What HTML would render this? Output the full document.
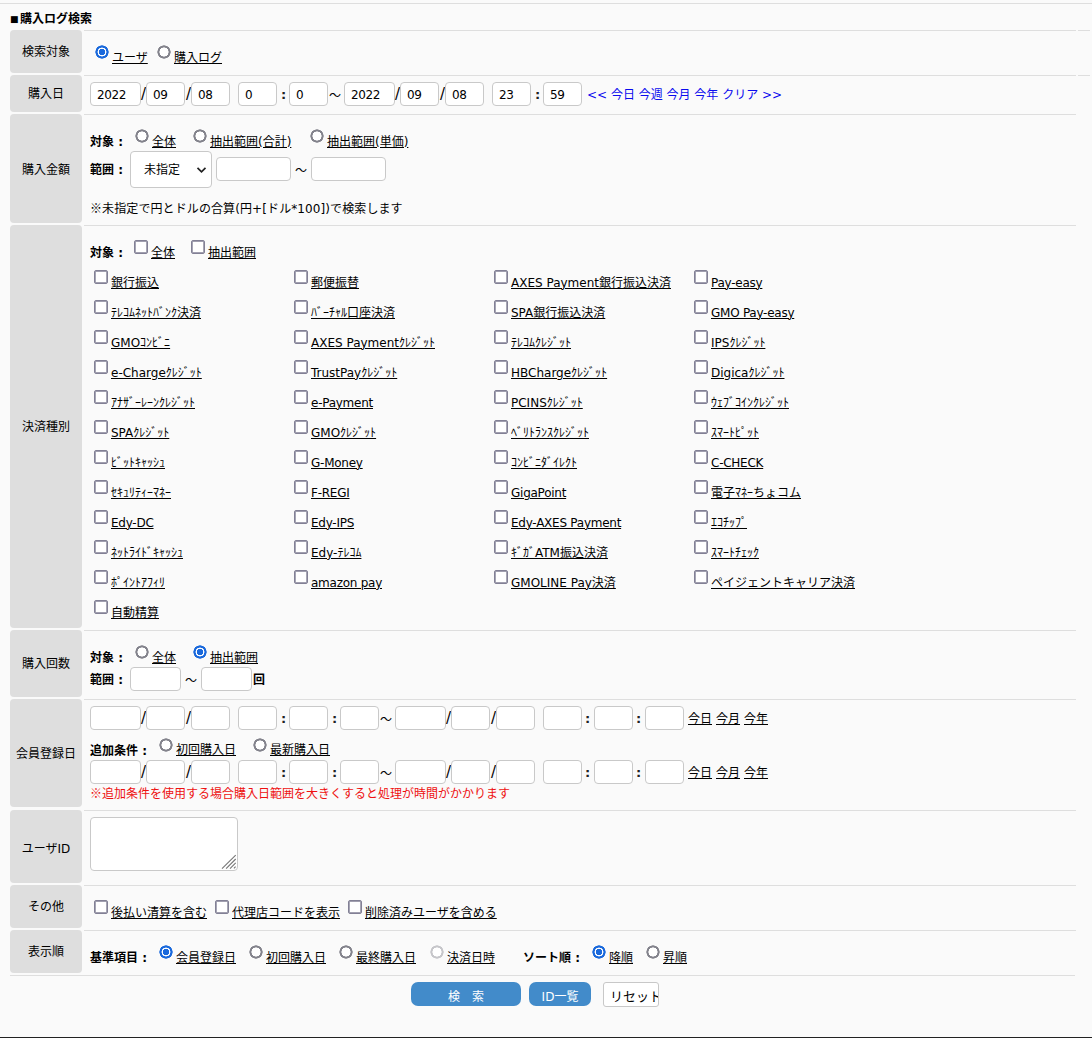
<!DOCTYPE html>
<html lang="ja"><head><meta charset="utf-8"><title>購入ログ検索</title>
<style>
*{box-sizing:border-box}
html,body{margin:0;padding:0}
body{width:1092px;height:1038px;position:relative;overflow:hidden;background:#fafafa;color:#000;
 font-family:"DejaVu Sans","Liberation Sans","Noto Sans CJK JP",sans-serif;font-size:12px;line-height:16px}
.abs,.t,.b,.u,.th,.td,.in,.hl,input,textarea,.sel,.btn{position:absolute}
.t,.b,.u{white-space:nowrap;height:16px;line-height:16px}
.b{font-weight:bold}
.u{text-decoration:underline;text-underline-offset:0.5px;text-decoration-thickness:1px}
.th{left:10px;width:72px;background:#dedede;border-radius:4px;display:flex;align-items:center;justify-content:center;text-align:center;padding-top:1px}
.hl{height:1px;background:#dedede}
.in{height:24px;border:1px solid #c9c9c9;border-radius:4px;background:#fff;padding:0 0 0 6px;line-height:24px;font-size:12px;letter-spacing:-.4px}
.sl{font-size:15px;margin-top:-1px}
.co{font-size:13px;font-weight:bold;color:#222}
input[type=radio],input[type=checkbox]{margin:0;width:14px;height:14px;-webkit-appearance:none;appearance:none;background:#fff}
input[type=checkbox]{border:1px solid #828095;border-radius:2px;box-shadow:inset 0 0 0 .7px #828095}
input[type=radio]{border-radius:50%;background:radial-gradient(circle 7px at center,#fff 4.3px,#83838c 4.8px,#83838c 6.4px,rgba(131,131,140,0) 6.9px)}
input[type=radio]:checked{background:radial-gradient(circle 7px at center,#1a69dc 2.9px,#fff 3.4px,#fff 4.2px,#1a69dc 4.7px,#1a69dc 6.4px,rgba(26,105,220,0) 6.9px)}
input[type=radio]:disabled{background:radial-gradient(circle 7px at center,#fff 4.3px,#c6c6ca 4.8px,#c6c6ca 6.4px,rgba(198,198,202,0) 6.9px)}
textarea{border:1px solid #c9c9c9;border-radius:4px;background:#fff;margin:0;padding:2px}
.sel{border:1px solid #c9c9c9;border-radius:4px;background:#fff}
.btn{border-radius:7px;background:#428bca;color:#fff;text-align:center;height:24px;line-height:31px;overflow:hidden}
.blue{color:#0a0aee}
.red{color:#ee1010}
.hk{font-family:"Noto Sans CJK JP","Liberation Sans",sans-serif}
</style></head>
<body>
<div class="hl" style="left:0px;top:3px;width:1092px"></div>
<div class="b" style="left:10px;top:11px"><span style="display:inline-block;width:10px;font-size:9px;vertical-align:1px">■</span>購入ログ検索</div>
<div class="th" style="top:30px;height:43px;">検索対象</div>
<div class="hl" style="left:84px;top:30px;width:992px"></div>
<div class="th" style="top:75px;height:37px;">購入日</div>
<div class="hl" style="left:84px;top:75px;width:992px"></div>
<div class="th" style="top:114px;height:109px;padding-top:3px;">購入金額</div>
<div class="hl" style="left:84px;top:114px;width:992px"></div>
<div class="th" style="top:225px;height:403px;">決済種別</div>
<div class="hl" style="left:84px;top:225px;width:992px"></div>
<div class="th" style="top:630px;height:67px;">購入回数</div>
<div class="hl" style="left:84px;top:630px;width:992px"></div>
<div class="th" style="top:699px;height:108px;padding-top:2px;">会員登録日</div>
<div class="hl" style="left:84px;top:699px;width:992px"></div>
<div class="th" style="top:810px;height:73px;padding-top:5px;">ユーザID</div>
<div class="hl" style="left:84px;top:810px;width:992px"></div>
<div class="th" style="top:885px;height:43px;">その他</div>
<div class="hl" style="left:84px;top:885px;width:992px"></div>
<div class="th" style="top:930px;height:43px;">表示順</div>
<div class="hl" style="left:84px;top:930px;width:992px"></div>
<div class="hl" style="left:1078px;top:30px;width:12px"></div>
<div class="hl" style="left:1078px;top:75px;width:12px"></div>
<div class="hl" style="left:10px;top:975px;width:1065px"></div>
<input type="radio" style="left:95px;top:45px" checked>
<div class="u" style="left:112px;top:50px;">ユーザ</div>
<input type="radio" style="left:157px;top:45px">
<div class="u" style="left:174px;top:50px;">購入ログ</div>
<div class="in" style="left:90px;top:82px;width:51px">2022</div>
<div class="t sl" style="left:141px;top:87px;">/</div>
<div class="in" style="left:146px;top:82px;width:39px">09</div>
<div class="t sl" style="left:186px;top:87px;">/</div>
<div class="in" style="left:191px;top:82px;width:39px">08</div>
<div class="in" style="left:238px;top:82px;width:39px">0</div>
<div class="t co" style="left:281px;top:87px;">:</div>
<div class="in" style="left:289px;top:82px;width:39px">0</div>
<div class="t hk" style="left:329px;top:87px;">～</div>
<div class="in" style="left:344px;top:82px;width:51px">2022</div>
<div class="t sl" style="left:395px;top:87px;">/</div>
<div class="in" style="left:400px;top:82px;width:39px">09</div>
<div class="t sl" style="left:440px;top:87px;">/</div>
<div class="in" style="left:445px;top:82px;width:39px">08</div>
<div class="in" style="left:492px;top:82px;width:39px">23</div>
<div class="t co" style="left:535px;top:87px;">:</div>
<div class="in" style="left:543px;top:82px;width:39px">59</div>
<div class="t blue" style="left:587px;top:87px;"><< 今日 今週 今月 今年 クリア >></div>
<div class="b" style="left:90px;top:134px;">対象 :</div>
<input type="radio" style="left:135px;top:129px">
<div class="u" style="left:152px;top:134px;">全体</div>
<input type="radio" style="left:193px;top:129px">
<div class="u" style="left:210px;top:134px;">抽出範囲(合計)</div>
<input type="radio" style="left:310px;top:129px">
<div class="u" style="left:327px;top:134px;">抽出範囲(単価)</div>
<div class="b" style="left:90px;top:162px;">範囲 :</div>
<div class="sel" style="left:130px;top:151px;width:82px;height:37px"><div class="t" style="left:13px;top:10px">未指定</div><svg class="abs" style="left:65px;top:14px" width="11" height="8" viewBox="0 0 11 8"><path d="M1.5 1.8 L5.5 5.8 L9.5 1.8" fill="none" stroke="#222" stroke-width="1.7"/></svg></div>
<div class="in" style="left:216px;top:157px;width:75px"></div>
<div class="t hk" style="left:295px;top:162px;">～</div>
<div class="in" style="left:311px;top:157px;width:75px"></div>
<div class="t" style="left:90px;top:200px;letter-spacing:.1px"><span class="hk">※</span>未指定で円とドルの合算(円+[ドル*100])で検索します</div>
<div class="b" style="left:90px;top:245px;">対象 :</div>
<input type="checkbox" style="left:134px;top:240px">
<div class="u" style="left:151px;top:245px;">全体</div>
<input type="checkbox" style="left:191px;top:240px">
<div class="u" style="left:208px;top:245px;">抽出範囲</div>
<input type="checkbox" style="left:94px;top:270px">
<div class="u" style="left:111px;top:275px;">銀行振込</div>
<input type="checkbox" style="left:294px;top:270px">
<div class="u" style="left:311px;top:275px;">郵便振替</div>
<input type="checkbox" style="left:494px;top:270px">
<div class="u" style="left:511px;top:275px;">AXES Payment銀行振込決済</div>
<input type="checkbox" style="left:694px;top:270px">
<div class="u" style="left:711px;top:275px;letter-spacing:-.25px;">Pay-easy</div>
<input type="checkbox" style="left:94px;top:300px">
<div class="u" style="left:111px;top:305px;">ﾃﾚｺﾑﾈｯﾄﾊﾞﾝｸ決済</div>
<input type="checkbox" style="left:294px;top:300px">
<div class="u" style="left:311px;top:305px;">ﾊﾞｰﾁｬﾙ口座決済</div>
<input type="checkbox" style="left:494px;top:300px">
<div class="u" style="left:511px;top:305px;">SPA銀行振込決済</div>
<input type="checkbox" style="left:694px;top:300px">
<div class="u" style="left:711px;top:305px;letter-spacing:-.25px;">GMO Pay-easy</div>
<input type="checkbox" style="left:94px;top:330px">
<div class="u" style="left:111px;top:335px;">GMOｺﾝﾋﾞﾆ</div>
<input type="checkbox" style="left:294px;top:330px">
<div class="u" style="left:311px;top:335px;">AXES Paymentｸﾚｼﾞｯﾄ</div>
<input type="checkbox" style="left:494px;top:330px">
<div class="u" style="left:511px;top:335px;">ﾃﾚｺﾑｸﾚｼﾞｯﾄ</div>
<input type="checkbox" style="left:694px;top:330px">
<div class="u" style="left:711px;top:335px;">IPSｸﾚｼﾞｯﾄ</div>
<input type="checkbox" style="left:94px;top:360px">
<div class="u" style="left:111px;top:365px;">e-Chargeｸﾚｼﾞｯﾄ</div>
<input type="checkbox" style="left:294px;top:360px">
<div class="u" style="left:311px;top:365px;">TrustPayｸﾚｼﾞｯﾄ</div>
<input type="checkbox" style="left:494px;top:360px">
<div class="u" style="left:511px;top:365px;">HBChargeｸﾚｼﾞｯﾄ</div>
<input type="checkbox" style="left:694px;top:360px">
<div class="u" style="left:711px;top:365px;">Digicaｸﾚｼﾞｯﾄ</div>
<input type="checkbox" style="left:94px;top:390px">
<div class="u" style="left:111px;top:395px;">ｱﾅｻﾞｰﾚｰﾝｸﾚｼﾞｯﾄ</div>
<input type="checkbox" style="left:294px;top:390px">
<div class="u" style="left:311px;top:395px;letter-spacing:-.25px;">e-Payment</div>
<input type="checkbox" style="left:494px;top:390px">
<div class="u" style="left:511px;top:395px;">PCINSｸﾚｼﾞｯﾄ</div>
<input type="checkbox" style="left:694px;top:390px">
<div class="u" style="left:711px;top:395px;">ｳｪﾌﾞｺｲﾝｸﾚｼﾞｯﾄ</div>
<input type="checkbox" style="left:94px;top:420px">
<div class="u" style="left:111px;top:425px;">SPAｸﾚｼﾞｯﾄ</div>
<input type="checkbox" style="left:294px;top:420px">
<div class="u" style="left:311px;top:425px;">GMOｸﾚｼﾞｯﾄ</div>
<input type="checkbox" style="left:494px;top:420px">
<div class="u" style="left:511px;top:425px;">ﾍﾞﾘﾄﾗﾝｽｸﾚｼﾞｯﾄ</div>
<input type="checkbox" style="left:694px;top:420px">
<div class="u" style="left:711px;top:425px;">ｽﾏｰﾄﾋﾟｯﾄ</div>
<input type="checkbox" style="left:94px;top:450px">
<div class="u" style="left:111px;top:455px;">ﾋﾞｯﾄｷｬｯｼｭ</div>
<input type="checkbox" style="left:294px;top:450px">
<div class="u" style="left:311px;top:455px;letter-spacing:-.25px;">G-Money</div>
<input type="checkbox" style="left:494px;top:450px">
<div class="u" style="left:511px;top:455px;">ｺﾝﾋﾞﾆﾀﾞｲﾚｸﾄ</div>
<input type="checkbox" style="left:694px;top:450px">
<div class="u" style="left:711px;top:455px;letter-spacing:-.25px;">C-CHECK</div>
<input type="checkbox" style="left:94px;top:480px">
<div class="u" style="left:111px;top:485px;">ｾｷｭﾘﾃｨｰﾏﾈｰ</div>
<input type="checkbox" style="left:294px;top:480px">
<div class="u" style="left:311px;top:485px;letter-spacing:-.25px;">F-REGI</div>
<input type="checkbox" style="left:494px;top:480px">
<div class="u" style="left:511px;top:485px;letter-spacing:-.25px;">GigaPoint</div>
<input type="checkbox" style="left:694px;top:480px">
<div class="u" style="left:711px;top:485px;">電子ﾏﾈｰちょコム</div>
<input type="checkbox" style="left:94px;top:510px">
<div class="u" style="left:111px;top:515px;letter-spacing:-.25px;">Edy-DC</div>
<input type="checkbox" style="left:294px;top:510px">
<div class="u" style="left:311px;top:515px;letter-spacing:-.25px;">Edy-IPS</div>
<input type="checkbox" style="left:494px;top:510px">
<div class="u" style="left:511px;top:515px;letter-spacing:-.25px;">Edy-AXES Payment</div>
<input type="checkbox" style="left:694px;top:510px">
<div class="u" style="left:711px;top:515px;">ｴｺﾁｯﾌﾟ</div>
<input type="checkbox" style="left:94px;top:540px">
<div class="u" style="left:111px;top:545px;">ﾈｯﾄﾗｲﾄﾞｷｬｯｼｭ</div>
<input type="checkbox" style="left:294px;top:540px">
<div class="u" style="left:311px;top:545px;">Edy-ﾃﾚｺﾑ</div>
<input type="checkbox" style="left:494px;top:540px">
<div class="u" style="left:511px;top:545px;">ｷﾞｶﾞATM振込決済</div>
<input type="checkbox" style="left:694px;top:540px">
<div class="u" style="left:711px;top:545px;">ｽﾏｰﾄﾁｪｯｸ</div>
<input type="checkbox" style="left:94px;top:570px">
<div class="u" style="left:111px;top:575px;">ﾎﾟｲﾝﾄｱﾌｨﾘ</div>
<input type="checkbox" style="left:294px;top:570px">
<div class="u" style="left:311px;top:575px;letter-spacing:-.25px;">amazon pay</div>
<input type="checkbox" style="left:494px;top:570px">
<div class="u" style="left:511px;top:575px;">GMOLINE Pay決済</div>
<input type="checkbox" style="left:694px;top:570px">
<div class="u" style="left:711px;top:575px;">ペイジェントキャリア決済</div>
<input type="checkbox" style="left:94px;top:600px">
<div class="u" style="left:111px;top:605px;">自動精算</div>
<div class="b" style="left:90px;top:650px;">対象 :</div>
<input type="radio" style="left:135px;top:645px">
<div class="u" style="left:152px;top:650px;">全体</div>
<input type="radio" style="left:193px;top:645px" checked>
<div class="u" style="left:210px;top:650px;">抽出範囲</div>
<div class="b" style="left:90px;top:672px;">範囲 :</div>
<div class="in" style="left:130px;top:667px;width:51px"></div>
<div class="t hk" style="left:185px;top:672px;">～</div>
<div class="in" style="left:201px;top:667px;width:51px"></div>
<div class="b" style="left:253px;top:672px;">回</div>
<div class="in" style="left:90px;top:706px;width:51px"></div>
<div class="t sl" style="left:141px;top:711px;">/</div>
<div class="in" style="left:146px;top:706px;width:39px"></div>
<div class="t sl" style="left:186px;top:711px;">/</div>
<div class="in" style="left:191px;top:706px;width:39px"></div>
<div class="in" style="left:238px;top:706px;width:39px"></div>
<div class="t co" style="left:281px;top:711px;">:</div>
<div class="in" style="left:289px;top:706px;width:39px"></div>
<div class="t co" style="left:332px;top:711px;">:</div>
<div class="in" style="left:340px;top:706px;width:39px"></div>
<div class="t hk" style="left:380px;top:711px;">～</div>
<div class="in" style="left:395px;top:706px;width:51px"></div>
<div class="t sl" style="left:446px;top:711px;">/</div>
<div class="in" style="left:451px;top:706px;width:39px"></div>
<div class="t sl" style="left:491px;top:711px;">/</div>
<div class="in" style="left:496px;top:706px;width:39px"></div>
<div class="in" style="left:543px;top:706px;width:39px"></div>
<div class="t co" style="left:585px;top:711px;">:</div>
<div class="in" style="left:594px;top:706px;width:39px"></div>
<div class="t co" style="left:636px;top:711px;">:</div>
<div class="in" style="left:645px;top:706px;width:39px"></div>
<div class="u" style="left:688px;top:711px;">今日</div>
<div class="u" style="left:716px;top:711px;">今月</div>
<div class="u" style="left:744px;top:711px;">今年</div>
<div class="b" style="left:90px;top:743px;">追加条件 :</div>
<input type="radio" style="left:159px;top:738px">
<div class="u" style="left:176px;top:742px;">初回購入日</div>
<input type="radio" style="left:253px;top:738px">
<div class="u" style="left:270px;top:742px;">最新購入日</div>
<div class="in" style="left:90px;top:760px;width:51px"></div>
<div class="t sl" style="left:141px;top:765px;">/</div>
<div class="in" style="left:146px;top:760px;width:39px"></div>
<div class="t sl" style="left:186px;top:765px;">/</div>
<div class="in" style="left:191px;top:760px;width:39px"></div>
<div class="in" style="left:238px;top:760px;width:39px"></div>
<div class="t co" style="left:281px;top:765px;">:</div>
<div class="in" style="left:289px;top:760px;width:39px"></div>
<div class="t co" style="left:332px;top:765px;">:</div>
<div class="in" style="left:340px;top:760px;width:39px"></div>
<div class="t hk" style="left:380px;top:765px;">～</div>
<div class="in" style="left:395px;top:760px;width:51px"></div>
<div class="t sl" style="left:446px;top:765px;">/</div>
<div class="in" style="left:451px;top:760px;width:39px"></div>
<div class="t sl" style="left:491px;top:765px;">/</div>
<div class="in" style="left:496px;top:760px;width:39px"></div>
<div class="in" style="left:543px;top:760px;width:39px"></div>
<div class="t co" style="left:585px;top:765px;">:</div>
<div class="in" style="left:594px;top:760px;width:39px"></div>
<div class="t co" style="left:636px;top:765px;">:</div>
<div class="in" style="left:645px;top:760px;width:39px"></div>
<div class="u" style="left:688px;top:765px;">今日</div>
<div class="u" style="left:716px;top:765px;">今月</div>
<div class="u" style="left:744px;top:765px;">今年</div>
<div class="t red" style="left:90px;top:785px;"><span class="hk">※</span>追加条件を使用する場合購入日範囲を大きくすると処理が時間がかかります</div>
<textarea style="left:90px;top:817px;width:148px;height:54px;resize:none"></textarea>
<svg class="abs" style="left:221px;top:854px" width="16" height="16" viewBox="0 0 16 16"><path d="M1 14.6L14.7 1.1M5.1 14.6L14.7 5M9 14.6L14.7 8.9M12.9 14.3L14.6 12.6" stroke="#777" stroke-width="1.1" fill="none"/></svg>
<input type="checkbox" style="left:94px;top:900px">
<div class="u" style="left:111px;top:905px;">後払い清算を含む</div>
<input type="checkbox" style="left:215px;top:900px">
<div class="u" style="left:232px;top:905px;">代理店コードを表示</div>
<input type="checkbox" style="left:348px;top:900px">
<div class="u" style="left:365px;top:905px;">削除済みユーザを含める</div>
<div class="b" style="left:90px;top:950px;">基準項目 :</div>
<input type="radio" style="left:159px;top:945px" checked>
<div class="u" style="left:176px;top:950px;">会員登録日</div>
<input type="radio" style="left:249px;top:945px">
<div class="u" style="left:266px;top:950px;">初回購入日</div>
<input type="radio" style="left:339px;top:945px">
<div class="u" style="left:356px;top:950px;">最終購入日</div>
<input type="radio" style="left:430px;top:945px" disabled>
<div class="u" style="left:447px;top:950px;">決済日時</div>
<div class="b" style="left:523px;top:950px;">ソート順 :</div>
<input type="radio" style="left:592px;top:945px" checked>
<div class="u" style="left:609px;top:950px;">降順</div>
<input type="radio" style="left:646px;top:945px">
<div class="u" style="left:663px;top:950px;">昇順</div>
<div class="btn" style="left:411px;top:982px;width:110px">検　索</div>
<div class="btn" style="left:529px;top:982px;width:62px">ID一覧</div>
<div class="abs" style="left:603px;top:982px;width:56px;height:25px;border:1px solid #c8c8c8;border-radius:3px;background:#fff;overflow:hidden;white-space:nowrap;font-size:13px;line-height:28px;padding-left:6px">リセット</div>
<div class="abs" style="left:0;top:1037px;width:1092px;height:1px;background:#222"></div>
</body></html>
